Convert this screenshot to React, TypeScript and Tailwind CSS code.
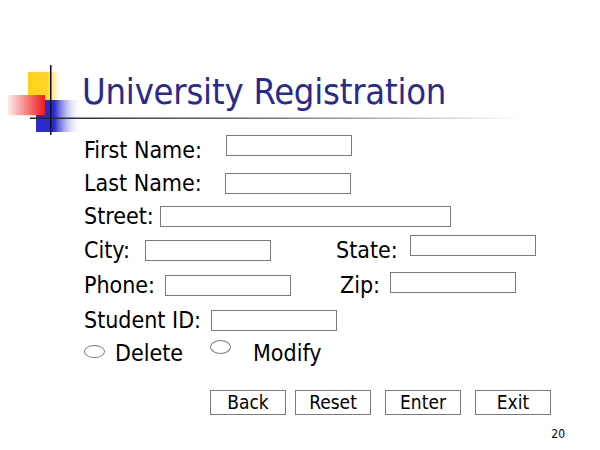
import React from "react";

const FONT = { fontFamily: '"DejaVu Sans Condensed", "DejaVu Sans", sans-serif', fontStretch: "condensed" as const };

function Box({ w = 126, className = "" }: { w?: number; className?: string }) {
  return (
    <div
      className={`h-[21px] border border-[#7a7a7a] bg-white ${className}`}
      style={{ width: w }}
    />
  );
}

function Logo() {
  return (
    <svg width="600" height="80" viewBox="0 60 600 80" className="absolute left-0 top-0">
      <defs>
        <linearGradient id="yel" x1="0" x2="1" y1="0" y2="0">
          <stop offset="0" stopColor="#ffd21a" />
          <stop offset="0.55" stopColor="#ffd52a" />
          <stop offset="1" stopColor="#ffffff" stopOpacity="0" />
        </linearGradient>
        <linearGradient id="red" x1="0" x2="1" y1="0" y2="0">
          <stop offset="0" stopColor="#ffeaea" />
          <stop offset="1" stopColor="#ee1a1a" />
        </linearGradient>
        <linearGradient id="blu" x1="0" x2="1" y1="0" y2="0">
          <stop offset="0" stopColor="#2a2ad0" />
          <stop offset="0.4" stopColor="#2a2ad0" />
          <stop offset="1" stopColor="#ffffff" stopOpacity="0" />
        </linearGradient>
        <linearGradient id="line" x1="0" x2="1" y1="0" y2="0">
          <stop offset="0" stopColor="#222" />
          <stop offset="0.5" stopColor="#777" />
          <stop offset="1" stopColor="#fff" />
        </linearGradient>
      </defs>
      <rect x="28" y="72" width="36" height="28" fill="url(#yel)" />
      <rect x="36" y="100" width="46" height="32" fill="url(#blu)" />
      <rect x="8" y="95" width="37" height="20" fill="url(#red)" />
      <rect x="30" y="117.5" width="492" height="1.5" fill="url(#line)" />
      <rect x="50" y="65" width="1.5" height="70" fill="#111" />
    </svg>
  );
}

export default function App() {
  return (
    <div className="relative w-[600px] h-[450px] bg-white overflow-hidden text-black" style={FONT}>
      <div className="relative mt-[60px] h-[73px]">
        <Logo />
        <h1 className="relative pl-[82px] pt-[10px] text-[36px] leading-[44px] text-[#2a2a8c] tracking-[-0.2px]">
          University Registration
        </h1>
      </div>

      <div className="pl-[84px] text-[23px] leading-none">
        <div className="flex items-center h-[34px]">
          <span className="w-[142px]">First Name:</span>
          <Box className="-mt-[9px]" />
        </div>
        <div className="flex items-center h-[33px]">
          <span className="w-[141px]">Last Name:</span>
          <Box />
        </div>
        <div className="flex items-center h-[33px]">
          <span className="w-[76px]">Street:</span>
          <Box w={291} />
        </div>
        <div className="flex items-center h-[35px]">
          <span className="w-[61px]">City:</span>
          <Box />
          <span className="w-[74px] ml-[65px]">State:</span>
          <Box className="-mt-[11px]" />
        </div>
        <div className="flex items-center h-[35px]">
          <span className="w-[81px]">Phone:</span>
          <Box />
          <span className="w-[50px] ml-[49px]">Zip:</span>
          <Box className="-mt-[7px]" />
        </div>
        <div className="flex items-center h-[34px]">
          <span className="w-[127px]">Student ID:</span>
          <Box />
        </div>
        <div className="flex items-center h-[33px]">
          <span className="w-[21px] h-[13px] rounded-[50%] border border-[#7a7a7a] mt-[-4px]" />
          <span className="ml-[10px] w-[95px]">Delete</span>
          <span className="w-[21px] h-[14px] rounded-[50%] border border-[#7a7a7a] mt-[-14px]" />
          <span className="ml-[22px]">Modify</span>
        </div>
      </div>

      <div className="flex pl-[210px] mt-[20px] text-[19px] leading-none">
        <div className="w-[76px] h-[25px] border border-[#7a7a7a] flex items-center justify-center">Back</div>
        <div className="w-[76px] h-[25px] border border-[#7a7a7a] flex items-center justify-center ml-[9px]">Reset</div>
        <div className="w-[76px] h-[25px] border border-[#7a7a7a] flex items-center justify-center ml-[14px]">Enter</div>
        <div className="w-[76px] h-[25px] border border-[#7a7a7a] flex items-center justify-center ml-[14px]">Exit</div>
      </div>

      <div className="flex justify-end pr-[35px] mt-[13px] text-[12px] leading-none">20</div>
    </div>
  );
}
